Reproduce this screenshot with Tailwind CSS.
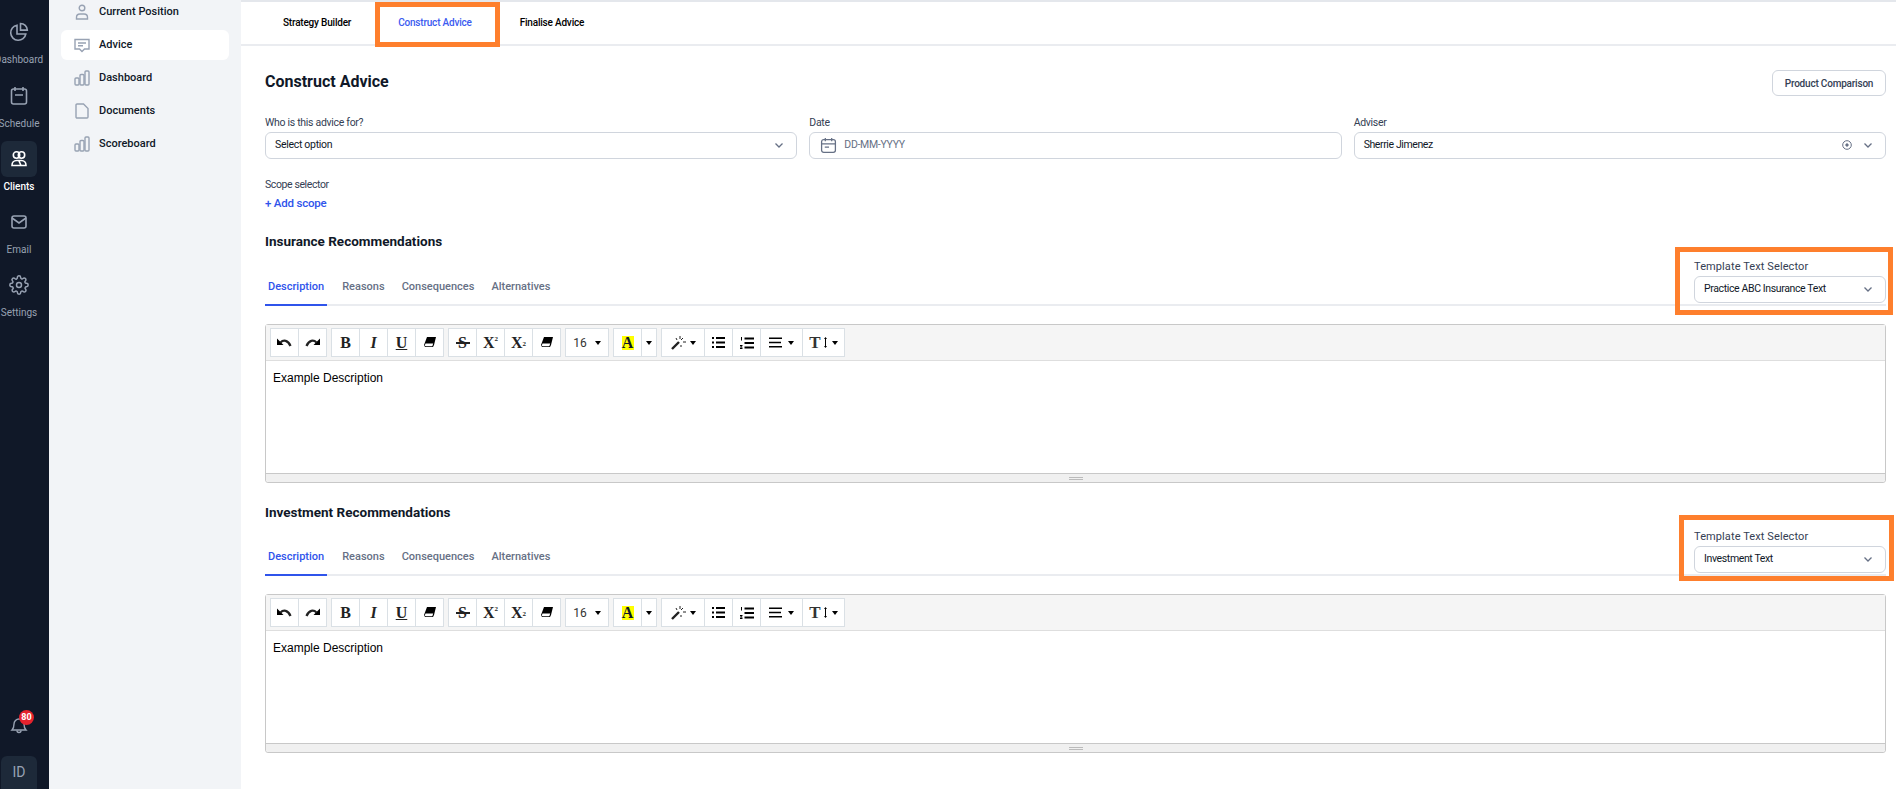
<!DOCTYPE html>
<html>
  <head>
    <meta charset="utf-8" />
    <title>Construct Advice</title>
    <script src="https://cdn.jsdelivr.net/npm/@tailwindcss/browser@4"></script>
  </head>
  <body class="h-screen overflow-hidden bg-white font-['Roboto',sans-serif] text-[#101828]">
    <div class="relative flex h-[789px] w-[1896px] overflow-hidden">
      <!-- icon rail -->
      <nav class="flex w-[49px] shrink-0 flex-col overflow-hidden bg-[#101828]">
        <div class="flex h-full w-[38px] flex-col items-center pt-[21px] text-[10px] text-[#98a2b3]">
          <a class="flex h-[63px] flex-col items-center">
            <svg class="h-[22px] w-[22px]" viewBox="0 0 22 22" fill="none" stroke="#98a2b3" stroke-width="1.6"><path d="M9 4.2a7.6 7.6 0 1 0 8.8 8.8H9z"/><path d="M12.5 2.5v6.6h6.8a6.8 6.8 0 0 0-6.8-6.6z"/></svg>
            <span class="mt-[10px] whitespace-nowrap leading-[14px]">Dashboard</span>
          </a>
          <a class="flex h-[57px] flex-col items-center">
            <svg class="mt-px h-[22px] w-[22px]" viewBox="0 0 22 22" fill="none" stroke="#98a2b3" stroke-width="1.6"><rect x="3.5" y="4" width="15" height="15" rx="2"/><path d="M7 2v4M15 2v4M7 10h8"/></svg>
            <span class="mt-[10px] leading-[14px]">Schedule</span>
          </a>
          <a class="flex h-[69px] w-[36px] flex-col items-center">
            <div class="flex h-[36px] w-[36px] shrink-0 items-center justify-center rounded-md bg-[#1d2939]">
              <svg class="h-[18px] w-[18px]" viewBox="0 0 18 18" fill="none" stroke="#fff" stroke-width="1.6"><circle cx="6.5" cy="5" r="3.2"/><circle cx="11.5" cy="5" r="3.2"/><path d="M2 15.500c0-3 2-5 4.500-5h5c2.500 0 4.500 2 4.500 5zM9 11l2 4.500"/></svg>
            </div>
            <span class="mt-[3px] font-medium leading-[14px] text-white">Clients</span>
          </a>
          <a class="flex h-[63px] flex-col items-center pt-[2px]">
            <svg class="h-[20px] w-[20px]" viewBox="0 0 20 20" fill="none" stroke="#98a2b3" stroke-width="1.6"><rect x="3" y="4" width="14" height="12" rx="2"/><path d="M3 6l7 5 7-5"/></svg>
            <span class="mt-[11px] leading-[14px]">Email</span>
          </a>
          <a class="flex h-[63px] flex-col items-center pt-[2px]">
            <svg class="h-[20px] w-[20px]" viewBox="0 0 24 24" fill="none" stroke="#98a2b3" stroke-width="1.8"><circle cx="12" cy="12" r="3"/><path d="M19.4 15a1.65 1.65 0 0 0 .33 1.82l.06.06a2 2 0 1 1-2.83 2.83l-.06-.06a1.65 1.65 0 0 0-2.82 1.17V21a2 2 0 1 1-4 0v-.09a1.65 1.65 0 0 0-2.82-1.17l-.06.06a2 2 0 1 1-2.83-2.83l.06-.06A1.65 1.65 0 0 0 3.09 14H3a2 2 0 1 1 0-4h.09a1.65 1.65 0 0 0 1.17-2.82l-.06-.06a2 2 0 1 1 2.83-2.83l.06.06A1.65 1.65 0 0 0 10 3.09V3a2 2 0 1 1 4 0v.09a1.65 1.65 0 0 0 2.82 1.17l.06-.06a2 2 0 1 1 2.83 2.83l-.06.06A1.65 1.65 0 0 0 20.91 10H21a2 2 0 1 1 0 4h-.09a1.65 1.65 0 0 0-1.51 1z"/></svg>
            <span class="mt-[11px] leading-[14px]">Settings</span>
          </a>
          <div class="relative mt-auto mb-[22px]">
            <svg class="h-[18px] w-[18px]" viewBox="0 0 18 18" fill="none" stroke="#98a2b3" stroke-width="1.4"><path d="M2 14c1.500-1.500 2-3 2-6a5 5 0 0 1 10 0c0 3 .5 4.500 2 6z"/><path d="M7 14.500a2 2 0 0 0 4 0"/></svg>
            <span class="absolute -top-[6px] left-[9px] flex h-[15px] w-[15px] items-center justify-center rounded-full bg-[#e5222d] text-[9px] font-bold text-white">80</span>
          </div>
          <div class="flex h-[33px] w-[36px] shrink-0 items-center justify-center rounded-t-md bg-[#1d2939] text-[14px] text-[#98a2b3]">ID</div>
        </div>
      </nav>

      <!-- section menu -->
      <aside class="flex w-[192px] shrink-0 flex-col gap-[3px] bg-[#f2f4f7] pr-[12px] pl-[12px] text-[11px] font-medium">
        <a class="-mt-[3px] flex h-[30px] items-center gap-[9px] rounded-md pl-[13px]">
          <svg class="h-[16px] w-[16px]" viewBox="0 0 16 16" fill="none" stroke="#98a2b3" stroke-width="1.4"><circle cx="8" cy="4" r="2.800"/><path d="M2.500 15v-1.500c0-2 1.500-3.500 3.500-3.500h4c2 0 3.500 1.500 3.500 3.500V15z"/></svg>
          Current Position
        </a>
        <a class="flex h-[30px] items-center gap-[9px] rounded-md bg-white pl-[13px]">
          <svg class="h-[16px] w-[16px]" viewBox="0 0 16 16" fill="none" stroke="#98a2b3" stroke-width="1.4"><path d="M1 2.500h14v9.500h-4.500L8 14.500 5.500 12H1z"/><path d="M4 6h8M4 8.800h5"/></svg>
          Advice
        </a>
        <a class="flex h-[30px] items-center gap-[9px] rounded-md pl-[13px]">
          <svg class="h-[16px] w-[16px]" viewBox="0 0 16 16" fill="none" stroke="#98a2b3" stroke-width="1.4"><rect x="1" y="8" width="4" height="7" rx="1"/><rect x="6" y="4.500" width="4" height="10.500" rx="1"/><rect x="11" y="1" width="4" height="14" rx="1"/></svg>
          Dashboard
        </a>
        <a class="flex h-[30px] items-center gap-[9px] rounded-md pl-[13px]">
          <svg class="h-[16px] w-[16px]" viewBox="0 0 16 16" fill="none" stroke="#98a2b3" stroke-width="1.4"><path d="M2 2a1 1 0 0 1 1-1h6.500L14 5.500V14a1 1 0 0 1-1 1H3a1 1 0 0 1-1-1z"/></svg>
          Documents
        </a>
        <a class="flex h-[30px] items-center gap-[9px] rounded-md pl-[13px]">
          <svg class="h-[16px] w-[16px]" viewBox="0 0 16 16" fill="none" stroke="#98a2b3" stroke-width="1.4"><rect x="1" y="8" width="4" height="7" rx="1"/><rect x="6" y="4.500" width="4" height="10.500" rx="1"/><rect x="11" y="1" width="4" height="14" rx="1"/></svg>
          Scoreboard
        </a>
      </aside>

      <!-- main -->
      <main class="min-w-0 flex-1 border-t-2 border-[#e4e7ec] bg-white">
        <div class="flex h-[44px] items-center border-b-2 border-[#eaecf0] pb-[2px] pl-[42px] text-[10px] font-medium tracking-[-0.2px] text-black">
          <a>Strategy Builder</a>
          <a class="ml-[47px] text-[#3b5bf0]">Construct Advice</a>
          <a class="ml-[48px]">Finalise Advice</a>
        </div>

        <div class="pt-[24px] pr-[10px] pl-[24px]">
          <div class="flex items-start justify-between">
            <h1 class="pt-px text-[16px] leading-[22px] font-bold">Construct Advice</h1>
            <button class="h-[26px] w-[114px] rounded-md border border-[#d0d5dd] text-[10px] font-medium tracking-[-0.2px] text-[#344054]">Product Comparison</button>
          </div>

          <div class="mt-[18px] grid grid-cols-3 gap-x-[12px] text-[10.500px] tracking-[-0.3px]">
            <div>
              <label class="block pt-px leading-[16px] text-[#344054]">Who is this advice for?</label>
              <div class="mt-px flex h-[27px] items-center justify-between rounded-md border border-[#d0d5dd] pr-[12px] pb-px pl-[9px]">
                Select option
                <svg class="h-[10px] w-[10px]" viewBox="0 0 10 10" fill="none" stroke="#667085" stroke-width="1.300"><path d="M1.500 3.500 5 7l3.500-3.500"/></svg>
              </div>
            </div>
            <div>
              <label class="block pt-px leading-[16px] text-[#344054]">Date</label>
              <div class="mt-px flex h-[27px] items-center gap-[7px] rounded-md border border-[#d0d5dd] pb-px pl-[10px] text-[#667085]">
                <svg class="h-[17px] w-[17px]" viewBox="0 0 16 16" fill="none" stroke="#667085" stroke-width="1.200"><rect x="1.500" y="2.500" width="13" height="12" rx="2"/><path d="M5 1v3M11 1v3M1.500 6.500h13M4.500 9.500h4"/></svg>
                DD-MM-YYYY
              </div>
            </div>
            <div>
              <label class="block pt-px leading-[16px] text-[#344054]">Adviser</label>
              <div class="mt-px flex h-[27px] items-center justify-between rounded-md border border-[#d0d5dd] pr-[12px] pb-px pl-[9px] tracking-[-0.4px]">
                Sherrie Jimenez
                <span class="flex items-center gap-[11px]">
                  <svg class="h-[10px] w-[10px]" viewBox="0 0 10 10" fill="none" stroke="#667085"><circle cx="5" cy="5" r="4.300"/><circle cx="5" cy="5" r="1.200" fill="#667085"/></svg>
                  <svg class="h-[10px] w-[10px]" viewBox="0 0 10 10" fill="none" stroke="#667085" stroke-width="1.300"><path d="M1.500 3.500 5 7l3.500-3.500"/></svg>
                </span>
              </div>
            </div>
          </div>

          <div class="mt-[18px] text-[10.500px] leading-[16px] tracking-[-0.4px] text-[#344054]">Scope selector</div>
          <a class="mt-[2px] block text-[11.500px] leading-[16px] font-medium tracking-[-0.2px] text-[#2f54eb]">+ Add scope</a>

          <!-- insurance -->
          <h2 class="mt-[22px] text-[13.500px] leading-[16px] font-bold">Insurance Recommendations</h2>
          <div class="mt-[10px] flex items-end justify-between border-b-2 border-[#eaecf0] pb-px">
            <div class="-mb-[3px] flex items-end gap-[17px] pl-[3px] text-[11px] font-medium text-[#667085]">
              <a class="-mr-[2px] -ml-[3px] border-b-2 border-[#2f54eb] px-[3px] pb-[9px] text-[#2f54eb]">Description</a>
              <a class="pb-[11px]">Reasons</a>
              <a class="pb-[11px]">Consequences</a>
              <a class="pb-[11px]">Alternatives</a>
            </div>
            <div class="w-[192px]">
              <label class="block text-[11px] leading-[16px] tracking-[0.1px] text-[#344054]">Template Text Selector</label>
              <div class="mt-px flex h-[27px] items-center justify-between rounded-md border border-[#d0d5dd] pr-[12px] pb-px pl-[9px] text-[10.500px] tracking-[-0.37px]">
                Practice ABC Insurance Text
                <svg class="h-[10px] w-[10px]" viewBox="0 0 10 10" fill="none" stroke="#667085" stroke-width="1.300"><path d="M1.500 3.500 5 7l3.500-3.500"/></svg>
              </div>
            </div>
          </div>

          <div class="mt-[18px] flex h-[159px] flex-col rounded-[3px] border border-[#c8c8c8]">
            <div class="flex h-[36px] shrink-0 items-start gap-[4px] border-b border-[#dedede] bg-[#f5f5f5] pt-[3px] pl-[4px]">
              <div class="flex">
                <button class="flex h-[29px] w-[29px] items-center justify-center border border-[#dae0e5] bg-white"><svg class="h-[11px] w-[15px]" viewBox="0 0 15 11"><path d="M0 1.500V8h6.500z"/><path d="M3.500 5.500C6.500 2.500 11 3 13.500 9" fill="none" stroke="#222" stroke-width="2.300"/></svg></button>
                <button class="-ml-px flex h-[29px] w-[29px] items-center justify-center border border-[#dae0e5] bg-white"><svg class="h-[11px] w-[15px]" viewBox="0 0 15 11"><path d="M15 1.500V8H8.500z"/><path d="M11.500 5.500C8.500 2.500 4 3 1.500 9" fill="none" stroke="#222" stroke-width="2.300"/></svg></button>
              </div>
              <div class="flex font-['Liberation_Serif',serif] text-[16px] font-bold text-[#222]">
                <button class="flex h-[29px] w-[29px] items-center justify-center border border-[#dae0e5] bg-white">B</button>
                <button class="-ml-px flex h-[29px] w-[29px] items-center justify-center border border-[#dae0e5] bg-white italic">I</button>
                <button class="-ml-px flex h-[29px] w-[29px] items-center justify-center border border-[#dae0e5] bg-white"><span class="underline">U</span></button>
                <button class="-ml-px flex h-[29px] w-[29px] items-center justify-center border border-[#dae0e5] bg-white"><svg class="h-[11px] w-[12px]" viewBox="0 0 12 11"><path d="M3 0h9l-2 8-1 2H1l-1-2zM1.500 6.500.8 8.500l.7.800h6.800l.9-2.800z"/><path fill="#fff" d="M2 7h6.200l-.4 1.500H1.700z"/></svg></button>
              </div>
              <div class="flex font-['Liberation_Serif',serif] text-[16px] font-bold text-[#222]">
                <button class="relative flex h-[29px] w-[29px] items-center justify-center border border-[#dae0e5] bg-white">S<span class="absolute top-[13px] left-[7px] h-[1.500px] w-[14px] bg-[#222]"></span></button>
                <button class="-ml-px flex h-[29px] w-[29px] items-center justify-center border border-[#dae0e5] bg-white">X<sup class="text-[7px]">2</sup></button>
                <button class="-ml-px flex h-[29px] w-[29px] items-center justify-center border border-[#dae0e5] bg-white">X<sub class="text-[7px]">2</sub></button>
                <button class="-ml-px flex h-[29px] w-[29px] items-center justify-center border border-[#dae0e5] bg-white"><svg class="h-[11px] w-[12px]" viewBox="0 0 12 11"><path d="M3 0h9l-2 8-1 2H1l-1-2zM1.500 6.500.8 8.500l.7.800h6.800l.9-2.800z"/><path fill="#fff" d="M2 7h6.200l-.4 1.500H1.700z"/></svg></button>
              </div>
              <button class="flex h-[29px] w-[44px] items-center justify-center gap-[8px] border border-[#dae0e5] bg-white text-[12px] text-[#333]">16 <svg class="h-[4px] w-[6px]" viewBox="0 0 6 4"><path d="M0 0h6L3 4z"/></svg></button>
              <div class="flex">
                <button class="flex h-[29px] w-[29px] items-center justify-center border border-[#dae0e5] bg-white"><span class="flex h-[14px] w-[12px] items-center justify-center bg-[#ffff00] font-['Liberation_Serif',serif] text-[16px] leading-none font-bold">A</span></button>
                <button class="-ml-px flex h-[29px] w-[16px] items-center justify-center border border-[#dae0e5] bg-white"><svg class="h-[4px] w-[6px]" viewBox="0 0 6 4"><path d="M0 0h6L3 4z"/></svg></button>
              </div>
              <div class="flex">
                <button class="flex h-[29px] w-[44px] items-center justify-center gap-[4px] border border-[#dae0e5] bg-white"><svg class="h-[14px] w-[15px]" viewBox="0 0 15 14" fill="none" stroke="#222"><path stroke-width="2.400" d="M1 13 8 6"/><path d="M9 0v3M12 6h3M10 9v2M5 2l1 2M12 2l-2 2"/></svg><svg class="h-[4px] w-[6px]" viewBox="0 0 6 4"><path d="M0 0h6L3 4z"/></svg></button>
                <button class="-ml-px flex h-[29px] w-[29px] items-center justify-center border border-[#dae0e5] bg-white"><svg class="h-[11px] w-[13px]" viewBox="0 0 13 11"><path d="M0 0h2v2H0zM0 4.500h2v2H0zM0 9h2v2H0zM4 0h9v2H4zM4 4.500h9v2H4zM4 9h9v2H4z"/></svg></button>
                <button class="-ml-px flex h-[29px] w-[29px] items-center justify-center border border-[#dae0e5] bg-white"><svg class="h-[12px] w-[14px]" viewBox="0 0 14 12"><path d="M4.500 .5H14v2H4.500zM4.500 5H14v2H4.500zM4.500 9.500H14v2H4.500z"/><path d="M1 0h1v3.500H1zM0 8h2.500v1L1 10.500h1.500V12H0v-1l1.500-1.500H0z"/></svg></button>
                <button class="-ml-px flex h-[29px] w-[43px] items-center justify-center gap-[6px] border border-[#dae0e5] bg-white"><svg class="h-[11px] w-[13px]" viewBox="0 0 13 11"><path d="M0 .5h13V2H0zM0 4.800h12v1.500H0zM0 9h13v1.500H0z"/></svg><svg class="h-[4px] w-[6px]" viewBox="0 0 6 4"><path d="M0 0h6L3 4z"/></svg></button>
                <button class="-ml-px flex h-[29px] w-[43px] items-center justify-center gap-[3px] border border-[#dae0e5] bg-white font-['Liberation_Serif',serif] text-[17px] font-bold text-[#333]">T<svg class="h-[11px] w-[3px]" viewBox="0 0 3 11"><path d="M1 2H0L1.500 0 3 2H2v7h1l-1.500 2L0 9h1z"/></svg><svg class="ml-[2px] h-[4px] w-[6px]" viewBox="0 0 6 4"><path d="M0 0h6L3 4z"/></svg></button>
              </div>
            </div>
            <div class="flex-1 px-[7px] py-[9px] font-['Liberation_Sans',sans-serif] text-[12px] leading-[16px] text-black">Example Description</div>
            <div class="flex h-[9px] shrink-0 flex-col items-center justify-center gap-px rounded-b-[3px] border-t border-[#c8c8c8] bg-[#f0f0f0]">
              <span class="h-px w-[14px] bg-[#bbb]"></span>
              <span class="h-px w-[14px] bg-[#bbb]"></span>
            </div>
          </div>

          <!-- investment -->
          <h2 class="mt-[21px] text-[13.500px] leading-[16px] font-bold">Investment Recommendations</h2>
          <div class="mt-[9px] flex items-end justify-between border-b-2 border-[#eaecf0] pb-px">
            <div class="-mb-[3px] flex items-end gap-[17px] pl-[3px] text-[11px] font-medium text-[#667085]">
              <a class="-mr-[2px] -ml-[3px] border-b-2 border-[#2f54eb] px-[3px] pb-[9px] text-[#2f54eb]">Description</a>
              <a class="pb-[11px]">Reasons</a>
              <a class="pb-[11px]">Consequences</a>
              <a class="pb-[11px]">Alternatives</a>
            </div>
            <div class="w-[192px]">
              <label class="block text-[11px] leading-[16px] tracking-[0.1px] text-[#344054]">Template Text Selector</label>
              <div class="mt-px flex h-[27px] items-center justify-between rounded-md border border-[#d0d5dd] pr-[12px] pb-px pl-[9px] text-[10.500px] tracking-[-0.37px]">
                Investment Text
                <svg class="h-[10px] w-[10px]" viewBox="0 0 10 10" fill="none" stroke="#667085" stroke-width="1.300"><path d="M1.500 3.500 5 7l3.500-3.500"/></svg>
              </div>
            </div>
          </div>

          <div class="mt-[18px] flex h-[159px] flex-col rounded-[3px] border border-[#c8c8c8]">
            <div class="flex h-[36px] shrink-0 items-start gap-[4px] border-b border-[#dedede] bg-[#f5f5f5] pt-[3px] pl-[4px]">
              <div class="flex">
                <button class="flex h-[29px] w-[29px] items-center justify-center border border-[#dae0e5] bg-white"><svg class="h-[11px] w-[15px]" viewBox="0 0 15 11"><path d="M0 1.500V8h6.500z"/><path d="M3.500 5.500C6.500 2.500 11 3 13.500 9" fill="none" stroke="#222" stroke-width="2.300"/></svg></button>
                <button class="-ml-px flex h-[29px] w-[29px] items-center justify-center border border-[#dae0e5] bg-white"><svg class="h-[11px] w-[15px]" viewBox="0 0 15 11"><path d="M15 1.500V8H8.500z"/><path d="M11.500 5.500C8.500 2.500 4 3 1.500 9" fill="none" stroke="#222" stroke-width="2.300"/></svg></button>
              </div>
              <div class="flex font-['Liberation_Serif',serif] text-[16px] font-bold text-[#222]">
                <button class="flex h-[29px] w-[29px] items-center justify-center border border-[#dae0e5] bg-white">B</button>
                <button class="-ml-px flex h-[29px] w-[29px] items-center justify-center border border-[#dae0e5] bg-white italic">I</button>
                <button class="-ml-px flex h-[29px] w-[29px] items-center justify-center border border-[#dae0e5] bg-white"><span class="underline">U</span></button>
                <button class="-ml-px flex h-[29px] w-[29px] items-center justify-center border border-[#dae0e5] bg-white"><svg class="h-[11px] w-[12px]" viewBox="0 0 12 11"><path d="M3 0h9l-2 8-1 2H1l-1-2zM1.500 6.500.8 8.500l.7.800h6.800l.9-2.800z"/><path fill="#fff" d="M2 7h6.200l-.4 1.500H1.700z"/></svg></button>
              </div>
              <div class="flex font-['Liberation_Serif',serif] text-[16px] font-bold text-[#222]">
                <button class="relative flex h-[29px] w-[29px] items-center justify-center border border-[#dae0e5] bg-white">S<span class="absolute top-[13px] left-[7px] h-[1.500px] w-[14px] bg-[#222]"></span></button>
                <button class="-ml-px flex h-[29px] w-[29px] items-center justify-center border border-[#dae0e5] bg-white">X<sup class="text-[7px]">2</sup></button>
                <button class="-ml-px flex h-[29px] w-[29px] items-center justify-center border border-[#dae0e5] bg-white">X<sub class="text-[7px]">2</sub></button>
                <button class="-ml-px flex h-[29px] w-[29px] items-center justify-center border border-[#dae0e5] bg-white"><svg class="h-[11px] w-[12px]" viewBox="0 0 12 11"><path d="M3 0h9l-2 8-1 2H1l-1-2zM1.500 6.500.8 8.500l.7.800h6.800l.9-2.800z"/><path fill="#fff" d="M2 7h6.200l-.4 1.500H1.700z"/></svg></button>
              </div>
              <button class="flex h-[29px] w-[44px] items-center justify-center gap-[8px] border border-[#dae0e5] bg-white text-[12px] text-[#333]">16 <svg class="h-[4px] w-[6px]" viewBox="0 0 6 4"><path d="M0 0h6L3 4z"/></svg></button>
              <div class="flex">
                <button class="flex h-[29px] w-[29px] items-center justify-center border border-[#dae0e5] bg-white"><span class="flex h-[14px] w-[12px] items-center justify-center bg-[#ffff00] font-['Liberation_Serif',serif] text-[16px] leading-none font-bold">A</span></button>
                <button class="-ml-px flex h-[29px] w-[16px] items-center justify-center border border-[#dae0e5] bg-white"><svg class="h-[4px] w-[6px]" viewBox="0 0 6 4"><path d="M0 0h6L3 4z"/></svg></button>
              </div>
              <div class="flex">
                <button class="flex h-[29px] w-[44px] items-center justify-center gap-[4px] border border-[#dae0e5] bg-white"><svg class="h-[14px] w-[15px]" viewBox="0 0 15 14" fill="none" stroke="#222"><path stroke-width="2.400" d="M1 13 8 6"/><path d="M9 0v3M12 6h3M10 9v2M5 2l1 2M12 2l-2 2"/></svg><svg class="h-[4px] w-[6px]" viewBox="0 0 6 4"><path d="M0 0h6L3 4z"/></svg></button>
                <button class="-ml-px flex h-[29px] w-[29px] items-center justify-center border border-[#dae0e5] bg-white"><svg class="h-[11px] w-[13px]" viewBox="0 0 13 11"><path d="M0 0h2v2H0zM0 4.500h2v2H0zM0 9h2v2H0zM4 0h9v2H4zM4 4.500h9v2H4zM4 9h9v2H4z"/></svg></button>
                <button class="-ml-px flex h-[29px] w-[29px] items-center justify-center border border-[#dae0e5] bg-white"><svg class="h-[12px] w-[14px]" viewBox="0 0 14 12"><path d="M4.500 .5H14v2H4.500zM4.500 5H14v2H4.500zM4.500 9.500H14v2H4.500z"/><path d="M1 0h1v3.500H1zM0 8h2.500v1L1 10.500h1.500V12H0v-1l1.500-1.500H0z"/></svg></button>
                <button class="-ml-px flex h-[29px] w-[43px] items-center justify-center gap-[6px] border border-[#dae0e5] bg-white"><svg class="h-[11px] w-[13px]" viewBox="0 0 13 11"><path d="M0 .5h13V2H0zM0 4.800h12v1.500H0zM0 9h13v1.500H0z"/></svg><svg class="h-[4px] w-[6px]" viewBox="0 0 6 4"><path d="M0 0h6L3 4z"/></svg></button>
                <button class="-ml-px flex h-[29px] w-[43px] items-center justify-center gap-[3px] border border-[#dae0e5] bg-white font-['Liberation_Serif',serif] text-[17px] font-bold text-[#333]">T<svg class="h-[11px] w-[3px]" viewBox="0 0 3 11"><path d="M1 2H0L1.500 0 3 2H2v7h1l-1.500 2L0 9h1z"/></svg><svg class="ml-[2px] h-[4px] w-[6px]" viewBox="0 0 6 4"><path d="M0 0h6L3 4z"/></svg></button>
              </div>
            </div>
            <div class="flex-1 px-[7px] py-[9px] font-['Liberation_Sans',sans-serif] text-[12px] leading-[16px] text-black">Example Description</div>
            <div class="flex h-[9px] shrink-0 flex-col items-center justify-center gap-px rounded-b-[3px] border-t border-[#c8c8c8] bg-[#f0f0f0]">
              <span class="h-px w-[14px] bg-[#bbb]"></span>
              <span class="h-px w-[14px] bg-[#bbb]"></span>
            </div>
          </div>
        </div>
      </main>

      <!-- orange callouts drawn over the page -->
      <div class="pointer-events-none absolute top-[2px] left-[375px] h-[45px] w-[125px] border-[5px] border-[#fe7f2d]"></div>
      <div class="pointer-events-none absolute top-[247px] left-[1675px] h-[68px] w-[218px] border-[5px] border-[#fe7f2d]"></div>
      <div class="pointer-events-none absolute top-[515px] left-[1679px] h-[66px] w-[215px] border-[5px] border-[#fe7f2d]"></div>
    </div>
  </body>
</html>
